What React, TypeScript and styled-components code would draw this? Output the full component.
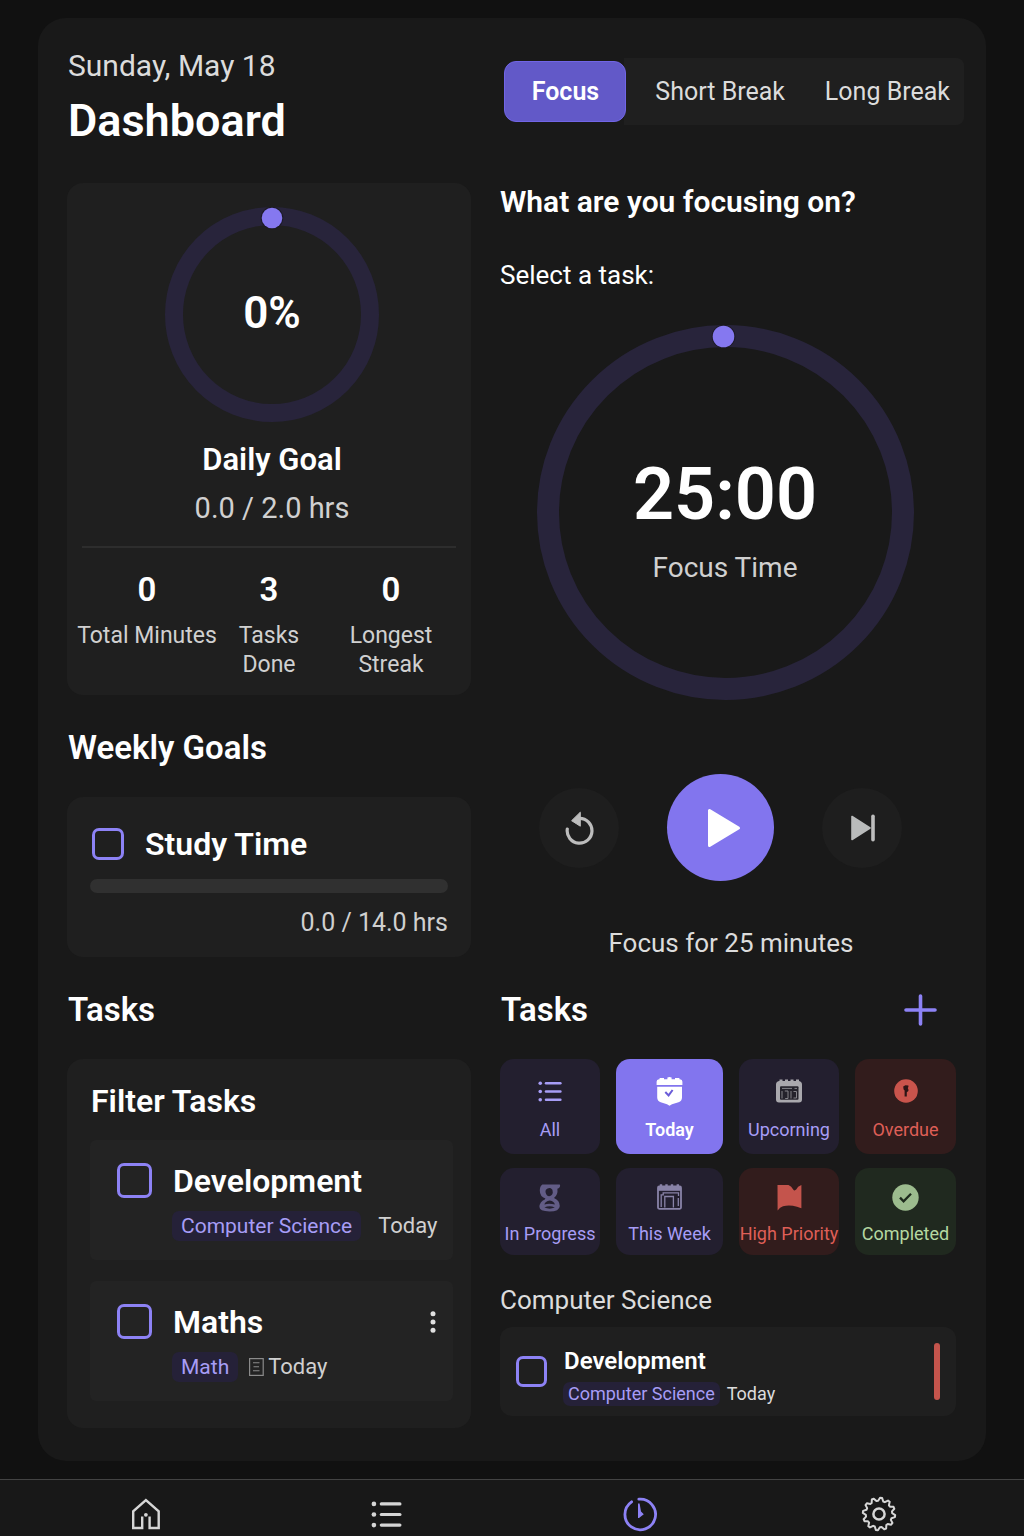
import React, { useState } from "react";
import styled, { createGlobalStyle, css } from "styled-components";

const color = {
  page: "#111111",
  panel: "#191919",
  card: "#1f1f1f",
  item: "#232323",
  ring: "#28243b",
  accent: "#8275ee",
  outline: "#8d82f5",
  lilac: "#a79df6",
  text: "#ffffff",
  soft: "#dcdcdc",
  muted: "#d0d0d0",
  red: "#c4544c",
};

const GlobalStyle = createGlobalStyle`
  *, *::before, *::after { box-sizing: border-box; }
  body {
    margin: 0;
    background: ${color.page};
    color: ${color.text};
    font-family: Roboto, "Liberation Sans", sans-serif;
  }
  h1, h2, h3, p, ul { margin: 0; padding: 0; }
  button { font: inherit; color: inherit; border: 0; padding: 0; cursor: pointer; }
  svg { display: block; flex: none; }
`;

const Page = styled.div`
  display: flex;
  flex-direction: column;
  min-height: 100vh;
`;

const Panel = styled.main`
  margin: 18px 38px;
  padding: 30px 22px 33px 29px;
  border-radius: 28px;
  background: ${color.panel};
  flex: 1;
`;

const Header = styled.header`
  display: grid;
  grid-template-columns: 404fr 463fr;
  column-gap: 29px;
  align-items: start;
`;

const Heading = styled.div`
  padding-left: 1px;
`;

const DateLine = styled.p`
  font-size: 30px;
  line-height: 36px;
  color: ${color.soft};
`;

const PageTitle = styled.h1`
  margin-top: 10px;
  font-size: 45px;
  line-height: 54px;
  font-weight: 600;
`;

const Tabs = styled.div`
  display: flex;
  justify-content: space-between;
  margin-top: 10px;
  padding: 3px 3px 3px 4px;
  border-radius: 8px;
  background: linear-gradient(to right, transparent 124px, ${color.card} 124px);
`;

const Tab = styled.button<{ $active: boolean }>`
  height: 61px;
  padding: 0 11px;
  border-radius: 12px;
  background: transparent;
  font-size: 25px;
  color: ${color.soft};
  ${({ $active }) =>
    $active &&
    css`
      width: 122px;
      background: #6259c8;
      border: 1px solid #7165e6;
      color: ${color.text};
      font-weight: 600;
    `}
`;

const Columns = styled.div`
  display: grid;
  grid-template-columns: 404fr 456fr;
  column-gap: 29px;
  margin-top: 35px;
  padding-right: 8px;
`;

const Column = styled.div`
  display: flex;
  flex-direction: column;
  min-width: 0;
`;

const Card = styled.section`
  border-radius: 16px;
  background: ${color.card};
`;

const DailyCard = styled(Card)`
  padding: 24px 15px 16px;
`;

const DailySummary = styled.div`
  display: flex;
  flex-direction: column;
  align-items: center;
  padding-left: 6px;
`;

const RingBox = styled.div`
  display: grid;
  place-items: center;
  > * { grid-area: 1 / 1; }
`;

const Percent = styled.strong`
  padding-bottom: 4px;
  font-size: 44px;
  line-height: 52px;
  font-weight: 600;
`;

const GoalName = styled.h2`
  margin-top: 20px;
  font-size: 31px;
  line-height: 36px;
  font-weight: 600;
`;

const GoalHours = styled.p`
  margin-top: 12px;
  font-size: 29px;
  line-height: 36px;
  color: ${color.muted};
`;

const Stats = styled.ul`
  display: grid;
  grid-template-columns: repeat(3, minmax(0, 1fr));
  margin-top: 20px;
  padding: 23px 4px 0;
  border-top: 2px solid #2d2d2d;
  list-style: none;
`;

const Stat = styled.li`
  display: flex;
  flex-direction: column;
  align-items: center;
  text-align: center;
`;

const StatValue = styled.strong`
  font-size: 33px;
  line-height: 38px;
  font-weight: 600;
`;

const StatLabel = styled.span<{ $wide?: boolean }>`
  margin-top: 12px;
  width: min-content;
  font-size: 23px;
  line-height: 29px;
  color: ${color.muted};
  white-space: ${({ $wide }) => ($wide ? "nowrap" : "normal")};
`;

const SectionHead = styled.div`
  display: flex;
  align-items: center;
  justify-content: space-between;
  height: 40px;
  margin: 33px 0 29px;
  padding: 0 19px 0 1px;
`;

const SectionTitle = styled.h2`
  font-size: 33px;
  line-height: 40px;
  font-weight: 600;
`;

const IconButton = styled.button`
  display: grid;
  place-items: center;
  background: transparent;
`;

const Check = styled.input<{ $size: number }>`
  appearance: none;
  flex: none;
  width: ${({ $size }) => $size}px;
  height: ${({ $size }) => $size}px;
  margin: 0;
  border: 3px solid ${color.outline};
  border-radius: 7px;
  background: transparent;
  &:checked { background: ${color.outline}; }
`;

const WeeklyCard = styled(Card)`
  padding: 30px 23px 18px;
`;

const CheckRow = styled.div`
  display: flex;
  align-items: center;
  gap: 20px;
  padding-left: 2px;
`;

const ItemName = styled.label<{ $small?: boolean }>`
  padding-left: 1px;
  font-size: ${({ $small }) => ($small ? 24 : 32)}px;
  line-height: ${({ $small }) => ($small ? 30 : 34)}px;
  font-weight: 600;
`;

const Progress = styled.div`
  height: 14px;
  margin-top: 18px;
  border-radius: 7px;
  background: #303030;
`;

const WeeklyHours = styled.p`
  margin-top: 14px;
  font-size: 25px;
  line-height: 32px;
  text-align: right;
  color: ${color.muted};
`;

const FilterCard = styled(Card)`
  padding: 24px 18px 27px 23px;
`;

const FilterTitle = styled.h3`
  padding-left: 1px;
  font-size: 32px;
  line-height: 36px;
  font-weight: 600;
`;

const TaskList = styled.ul`
  display: grid;
  gap: 21px;
  margin-top: 21px;
  list-style: none;
`;

const TaskItem = styled.li`
  display: grid;
  grid-template-columns: 35px 1fr auto;
  column-gap: 20px;
  row-gap: 13px;
  align-items: center;
  padding: 23px 17px 19px 27px;
  border-radius: 6px;
  background: ${color.item};
`;

const TaskMeta = styled.div<{ $gap: number }>`
  display: flex;
  align-items: center;
  grid-column: 2 / -1;
  gap: ${({ $gap }) => $gap}px;
  color: ${color.muted};
  font-size: 22px;
  line-height: 30px;
  white-space: nowrap;
`;

const DueWithIcon = styled.span`
  display: flex;
  align-items: center;
  gap: 4px;
`;

const Chip = styled.span<{ $small?: boolean }>`
  padding: 0 ${({ $small }) => ($small ? 5 : 9)}px;
  border-radius: 7px;
  background: #252138;
  color: ${color.lilac};
  font-size: ${({ $small }) => ($small ? 18 : 21)}px;
  line-height: ${({ $small }) => ($small ? 24 : 30)}px;
`;

const Question = styled.h2`
  font-size: 30px;
  line-height: 38px;
  font-weight: 600;
`;

const SelectLine = styled.p`
  margin-top: 38px;
  font-size: 26px;
  line-height: 32px;
`;

const TimerRing = styled(RingBox)`
  margin-top: 34px;
  padding-right: 6px;
`;

const TimerText = styled.div`
  padding-top: 14px;
  text-align: center;
`;

const TimerValue = styled.div`
  font-size: 72px;
  line-height: 80px;
  font-weight: 600;
`;

const TimerLabel = styled.div`
  margin-top: 16px;
  font-size: 28px;
  line-height: 34px;
  color: ${color.muted};
`;

const Controls = styled.div`
  display: flex;
  align-items: center;
  justify-content: center;
  gap: 48px;
  margin-top: 74px;
  padding-right: 16px;
`;

const RoundButton = styled.button<{ $primary?: boolean }>`
  display: grid;
  place-items: center;
  width: ${({ $primary }) => ($primary ? 107 : 80)}px;
  aspect-ratio: 1;
  padding-left: ${({ $primary }) => ($primary ? 8 : 2)}px;
  border-radius: 50%;
  background: ${({ $primary }) => ($primary ? color.accent : "#1e1e1e")};
`;

const TimerNote = styled.p`
  margin-top: 48px;
  padding-left: 6px;
  font-size: 26px;
  line-height: 28px;
  text-align: center;
  color: ${color.soft};
`;

const Tiles = styled.div`
  display: grid;
  grid-template-columns: 100fr 107fr 100fr 101fr;
  gap: 14px 16px;
`;

type Tone = "violet" | "active" | "red" | "green";

const tones: Record<Tone, { bg: string; fg: string }> = {
  violet: { bg: "#231f2f", fg: color.lilac },
  active: { bg: "#8275ee", fg: "#ffffff" },
  red: { bg: "#321c1c", fg: "#df5f57" },
  green: { bg: "#20291f", fg: "#b5d8a2" },
};

const Tile = styled.button<{ $tone: Tone; $compact: boolean }>`
  display: flex;
  flex-direction: column;
  align-items: center;
  gap: ${({ $compact }) => ($compact ? 12 : 14)}px;
  min-width: 0;
  padding: ${({ $compact }) => ($compact ? "15px 0 10px" : "18px 0 13px")};
  border-radius: 14px;
  background: ${({ $tone }) => tones[$tone].bg};
  color: ${({ $tone }) => tones[$tone].fg};
  font-size: 18px;
  line-height: 22px;
  font-weight: ${({ $tone }) => ($tone === "active" ? 600 : 400)};
  white-space: nowrap;
`;

const TileIcon = styled.span`
  display: grid;
  place-items: center;
  height: 28px;
`;

const GroupName = styled.h3`
  margin-top: 29px;
  font-size: 26px;
  line-height: 32px;
  font-weight: 400;
  color: ${color.soft};
`;

const GroupCard = styled(Card)`
  display: flex;
  align-items: center;
  gap: 16px;
  margin-top: 11px;
  padding: 0 16px;
  border-radius: 12px;
`;

const GroupBody = styled.div`
  flex: 1;
  display: grid;
  gap: 6px;
  padding: 19px 0 10px;
`;

const GroupMeta = styled(TaskMeta)`
  grid-column: auto;
  font-size: 18px;
  line-height: 24px;
  color: ${color.soft};
`;

const Priority = styled.span`
  width: 6px;
  height: 57px;
  border-radius: 3px;
  background: ${color.red};
`;

const NavBar = styled.nav`
  display: grid;
  grid-template-columns: 229fr 253fr 253fr 225fr;
  align-items: center;
  justify-items: center;
  height: 57px;
  padding: 12px 32px 0 31px;
  border-top: 1px solid #434343;
  background: #181818;
`;

const NavLink = styled.a`
  display: grid;
  place-items: center;
  width: 44px;
  height: 36px;
  color: #d6d6d6;
`;

function Ring({ width, height, stroke, dot, shift }: { width: number; height: number; stroke: number; dot: number; shift: number }) {
  const cx = width / 2;
  const cy = height / 2;
  return (
    <svg width={width} height={height} viewBox={`0 0 ${width} ${height}`} aria-hidden="true">
      <ellipse cx={cx} cy={cy} rx={cx - stroke / 2} ry={cy - stroke / 2} fill="none" stroke={color.ring} strokeWidth={stroke} />
      <circle cx={cx + shift} cy={dot + 0.5} r={dot + 0.8} fill="#1c1a26" />
      <circle cx={cx + shift} cy={dot + 0.5} r={dot - 0.2} fill="#8578f0" />
    </svg>
  );
}

const ReplayIcon = () => (
  <svg width="30" height="34" viewBox="0 0 30 34" aria-hidden="true">
    <path d="M14.5 7.4A12.4 12.4 0 1 1 2.3 18" fill="none" stroke="#bdbdbd" strokeWidth="3.2" strokeLinecap="round" />
    <path d="M6.6 9.7L15.3 1.2V15.2Z" fill="#bdbdbd" stroke="#bdbdbd" strokeLinejoin="round" />
  </svg>
);

const PlayIcon = () => (
  <svg width="34" height="40" viewBox="0 0 34 40" aria-hidden="true">
    <path d="M2.5 2.5V37.5L31.5 20Z" fill="#fff" stroke="#fff" strokeWidth="3" strokeLinejoin="round" />
  </svg>
);

const SkipIcon = () => (
  <svg width="26" height="28" viewBox="0 0 26 28" aria-hidden="true">
    <path d="M2 2.5V25.5L20 14Z" fill="#b9bbbb" stroke="#b9bbbb" strokeWidth="1.6" strokeLinejoin="round" />
    <path d="M23 2.2V25.8" stroke="#bdbdbd" strokeWidth="3.6" strokeLinecap="round" />
  </svg>
);

const PlusIcon = () => (
  <svg width="33" height="32" viewBox="0 0 33 32" aria-hidden="true">
    <path d="M16.5 2V30M2 16H31" stroke={color.outline} strokeWidth="3.6" strokeLinecap="round" />
  </svg>
);

const ListIcon = ({ nav }: { nav?: boolean }) => (
  <svg width={nav ? 31 : 24} height={nav ? 27 : 21} viewBox="0 0 32 28" preserveAspectRatio="none" fill="currentColor" aria-hidden="true">
    {[3, 14, 25].map((y) => (
      <g key={y}>
        <circle cx="3" cy={y} r="2.4" />
        <rect x="9" y={y - 1.6} width="22.5" height="3.2" rx="1.6" />
      </g>
    ))}
  </svg>
);

const TodayIcon = () => (
  <svg width="27" height="29" viewBox="0 0 27 29" aria-hidden="true">
    <path d="M3 2.2H3.6V1H8V2.2H11.4V.6Q13.5-.6 15.6.6V2.2H19V1H23.4V2.2H24Q26.6 2.6 26.4 5V8H.6V5Q.4 2.6 3 2.2Z" fill="#fff" />
    <path d="M1.2 9.8H26V20.5Q26 24 22.5 25.3L16 27.2L13.5 28.7L11 27.2L4.7 25.3Q1.2 24 1.2 20.5Z" fill="#fff" />
    <path d="M9.3 15L12.6 18.4L16.6 13" fill="none" stroke="#6a5cd8" strokeWidth="2" />
  </svg>
);

const UpcomingIcon = () => (
  <svg width="26" height="24" viewBox="0 0 26 24" aria-hidden="true">
    <path d="M3 2H3.5V.5H6.5V2H9V.5H12V2H14.5V.5H17.5V2H20V.5H23V2Q26 2.5 26 5.5V20.5Q26 23.5 23 23.5H3Q0 23.5 0 20.5V5.5Q0 2.5 3 2Z" fill="#a9a8ad" />
    <rect x="4" y="7.2" width="18.5" height="13.6" rx="1" fill="#24222b" />
    <path d="M6 9.4H16M18.5 9.4H21M6 12V19.5M8.8 12H12V19.5H9.2M15 12V19.5M17.5 12.5H20.5V19H17.5" fill="none" stroke="#85848a" strokeWidth="1" />
  </svg>
);

const OverdueIcon = () => (
  <svg width="24" height="24" viewBox="0 0 24 24" aria-hidden="true">
    <circle cx="12" cy="12" r="11.8" fill="#c9544c" />
    <path d="M9.2 7.4L11.4 6.2L14.4 6.4V8L13.8 9L14.4 10.4V12L12.8 13.2V17.4H10.6V11.6L9.6 10.4Z" fill="#2c1516" />
  </svg>
);

const HourglassIcon = () => (
  <svg width="22" height="29" viewBox="0 0 22 29" aria-hidden="true">
    <path
      fillRule="evenodd"
      fill="#625c86"
      d="M3.4 1.4H20.6Q21.4 1.6 21 3.4Q20.4 5.2 18.4 5.8Q19.2 11.8 15 15Q20.8 17.6 20.8 23Q20.5 28.5 10.5 28.5Q.3 28.3.4 23.8Q.6 18.8 5.8 16.4L6.4 15.6Q.8 13.4.8 7.4Q.8 3 3.4 1.4ZM8.6 5.4Q6 6.4 6.6 9.4Q7.4 13 10.2 13.2Q13.4 12.8 13.8 9.6Q14 6.2 11.8 5.2Q10 4.8 8.6 5.4ZM10.8 17.6Q6 18.6 5.4 21.4Q10.6 19.8 15.8 21.6Q15.4 18.4 10.8 17.6ZM5.4 24.6Q10.5 26.8 15.8 24.6Q10.5 22 5.4 24.6Z"
    />
  </svg>
);

const WeekIcon = () => (
  <svg width="25" height="26" viewBox="0 0 25 26" fill="none" stroke="#8983a8" aria-hidden="true">
    <rect x="1" y="2.5" width="23" height="22.3" rx="1.2" strokeWidth="1.8" />
    <path d="M1 4.8H24" strokeWidth="4" />
    <path d="M4 .3V3M9.5 .3V3M15 .3V3M20.8 .3V3" strokeWidth="2.4" />
    <path d="M4.2 23V10.8H6.2V8.8H21.5V12M7.8 23.5V12.5H16.4V23.5M21.3 14V22" strokeWidth="1.3" />
  </svg>
);

const FlagIcon = () => (
  <svg width="25" height="27" viewBox="0 0 25 27" aria-hidden="true">
    <path d="M.5 1H11.5Q14.5 2.3 16.2 5.5Q17.5 7.3 19.2 5.6Q20.5 2.3 24.4 1V24.2L20 22.8Q13 20.6 6 22.2Q3 23 .6 26.4Z" fill="#c4544c" />
  </svg>
);

const DoneIcon = () => (
  <svg width="27" height="27" viewBox="0 0 27 27" aria-hidden="true">
    <circle cx="13.5" cy="13.5" r="13.2" fill="#9cbc8e" />
    <path d="M8 13.6L11.6 17.4L19 9.8" fill="none" stroke="#1d2a1c" strokeWidth="2.3" />
  </svg>
);

const MoreIcon = () => (
  <svg width="6" height="22" viewBox="0 0 6 22" fill="#e0e0e0" aria-hidden="true">
    {[2.7, 11, 19.3].map((y) => <circle key={y} cx="3" cy={y} r="2.5" />)}
  </svg>
);

const NoteIcon = () => (
  <svg width="15" height="18" viewBox="0 0 15 18" fill="none" stroke="#8b8b8b" aria-hidden="true">
    <rect x="0.6" y="0.6" width="13.6" height="16.8" strokeWidth="1.2" />
    <path d="M4 4.8H10.5M4.5 8.8H10M4 12.8H10.5" strokeWidth="1.1" />
  </svg>
);

const HomeIcon = () => (
  <svg width="30" height="32" viewBox="0 0 30 32" fill="none" stroke="currentColor" strokeWidth="2.4" aria-hidden="true">
    <path d="M18.6 18.5V30H27.7V13.4L14.9 2L2.2 13.4V30H11.2V18.5" />
    <circle cx="14.9" cy="16.8" r="1.9" fill="currentColor" stroke="none" />
  </svg>
);

const ClockIcon = () => (
  <svg width="34" height="35" viewBox="0 0 34 35" aria-hidden="true">
    <path d="M15.8 2.2A15.3 15.3 0 1 1 8.6 4.8" fill="none" stroke={color.outline} strokeWidth="2.8" strokeLinecap="round" />
    <path d="M15 6.5H16.6L18 14.5L20.8 17.3L16 21H15Z" fill={color.outline} />
  </svg>
);

const gearPath = Array.from({ length: 48 }, (_, i) => {
  const radius = i % 4 < 2 ? 16.2 : 13.2;
  const angle = ((i + 0.5) / 48) * Math.PI * 2;
  return `${i ? "L" : "M"}${(18 + radius * Math.cos(angle)).toFixed(2)} ${(18 + radius * Math.sin(angle)).toFixed(2)}`;
}).join("") + "Z";

const GearIcon = () => (
  <svg width="36" height="36" viewBox="0 0 36 36" fill="none" stroke="currentColor" strokeLinejoin="round" aria-hidden="true">
    <path d={gearPath} strokeWidth="2" />
    <circle cx="18" cy="18" r="5.6" strokeWidth="2.5" />
  </svg>
);

const modes = ["Focus", "Short Break", "Long Break"];

const tiles: { name: string; tone: Tone; icon: React.ReactNode }[] = [
  { name: "All", tone: "violet", icon: <ListIcon /> },
  { name: "Today", tone: "active", icon: <TodayIcon /> },
  { name: "Upcorning", tone: "violet", icon: <UpcomingIcon /> },
  { name: "Overdue", tone: "red", icon: <OverdueIcon /> },
  { name: "In Progress", tone: "violet", icon: <HourglassIcon /> },
  { name: "This Week", tone: "violet", icon: <WeekIcon /> },
  { name: "High Priority", tone: "red", icon: <FlagIcon /> },
  { name: "Completed", tone: "green", icon: <DoneIcon /> },
];

export default function App() {
  const [mode, setMode] = useState("Focus");

  return (
    <Page>
      <GlobalStyle />
      <Panel>
        <Header>
          <Heading>
            <DateLine>Sunday, May 18</DateLine>
            <PageTitle>Dashboard</PageTitle>
          </Heading>
          <Tabs>
            {modes.map((name) => (
              <Tab key={name} type="button" $active={mode === name} onClick={() => setMode(name)}>
                {name}
              </Tab>
            ))}
          </Tabs>
        </Header>

        <Columns>
          <Column>
            <DailyCard>
              <DailySummary>
                <RingBox>
                  <Ring width={214} height={215} stroke={18} dot={10.5} shift={0} />
                  <Percent>0%</Percent>
                </RingBox>
                <GoalName>Daily Goal</GoalName>
                <GoalHours>0.0 / 2.0 hrs</GoalHours>
              </DailySummary>
              <Stats>
                <Stat>
                  <StatValue>0</StatValue>
                  <StatLabel $wide>Total Minutes</StatLabel>
                </Stat>
                <Stat>
                  <StatValue>3</StatValue>
                  <StatLabel>Tasks Done</StatLabel>
                </Stat>
                <Stat>
                  <StatValue>0</StatValue>
                  <StatLabel>Longest Streak</StatLabel>
                </Stat>
              </Stats>
            </DailyCard>

            <SectionHead>
              <SectionTitle>Weekly Goals</SectionTitle>
            </SectionHead>
            <WeeklyCard>
              <CheckRow>
                <Check $size={32} type="checkbox" id="study-time" />
                <ItemName htmlFor="study-time">Study Time</ItemName>
              </CheckRow>
              <Progress role="progressbar" aria-label="Study Time" aria-valuenow={0} aria-valuemin={0} aria-valuemax={14} />
              <WeeklyHours>0.0 / 14.0 hrs</WeeklyHours>
            </WeeklyCard>

            <SectionHead>
              <SectionTitle>Tasks</SectionTitle>
            </SectionHead>
            <FilterCard>
              <FilterTitle>Filter Tasks</FilterTitle>
              <TaskList>
                <TaskItem>
                  <Check $size={35} type="checkbox" id="task-development" />
                  <ItemName htmlFor="task-development">Development</ItemName>
                  <TaskMeta $gap={17}>
                    <Chip>Computer Science</Chip>
                    <span>Today</span>
                  </TaskMeta>
                </TaskItem>
                <TaskItem>
                  <Check $size={35} type="checkbox" id="task-maths" />
                  <ItemName htmlFor="task-maths">Maths</ItemName>
                  <IconButton type="button" aria-label="More options">
                    <MoreIcon />
                  </IconButton>
                  <TaskMeta $gap={11}>
                    <Chip>Math</Chip>
                    <DueWithIcon>
                      <NoteIcon />
                      Today
                    </DueWithIcon>
                  </TaskMeta>
                </TaskItem>
              </TaskList>
            </FilterCard>
          </Column>

          <Column>
            <Question>What are you focusing on?</Question>
            <SelectLine>Select a task:</SelectLine>
            <TimerRing>
              <Ring width={377} height={375} stroke={22} dot={11} shift={-2} />
              <TimerText>
                <TimerValue>25:00</TimerValue>
                <TimerLabel>Focus Time</TimerLabel>
              </TimerText>
            </TimerRing>
            <Controls>
              <RoundButton type="button" aria-label="Restart">
                <ReplayIcon />
              </RoundButton>
              <RoundButton type="button" $primary aria-label="Start">
                <PlayIcon />
              </RoundButton>
              <RoundButton type="button" aria-label="Skip">
                <SkipIcon />
              </RoundButton>
            </Controls>
            <TimerNote>Focus for 25 minutes</TimerNote>

            <SectionHead>
              <SectionTitle>Tasks</SectionTitle>
              <IconButton type="button" aria-label="Add task">
                <PlusIcon />
              </IconButton>
            </SectionHead>
            <Tiles>
              {tiles.map((tile, index) => (
                <Tile key={tile.name} type="button" $tone={tile.tone} $compact={index > 3}>
                  <TileIcon>{tile.icon}</TileIcon>
                  {tile.name}
                </Tile>
              ))}
            </Tiles>

            <GroupName>Computer Science</GroupName>
            <GroupCard>
              <Check $size={31} type="checkbox" id="group-development" />
              <GroupBody>
                <ItemName $small htmlFor="group-development">Development</ItemName>
                <GroupMeta $gap={7}>
                  <Chip $small>Computer Science</Chip>
                  <span>Today</span>
                </GroupMeta>
              </GroupBody>
              <Priority />
            </GroupCard>
          </Column>
        </Columns>
      </Panel>

      <NavBar aria-label="Main">
        <NavLink href="#home" aria-label="Home"><HomeIcon /></NavLink>
        <NavLink href="#tasks" aria-label="Tasks"><ListIcon nav /></NavLink>
        <NavLink href="#timer" aria-label="Timer"><ClockIcon /></NavLink>
        <NavLink href="#settings" aria-label="Settings"><GearIcon /></NavLink>
      </NavBar>
    </Page>
  );
}
